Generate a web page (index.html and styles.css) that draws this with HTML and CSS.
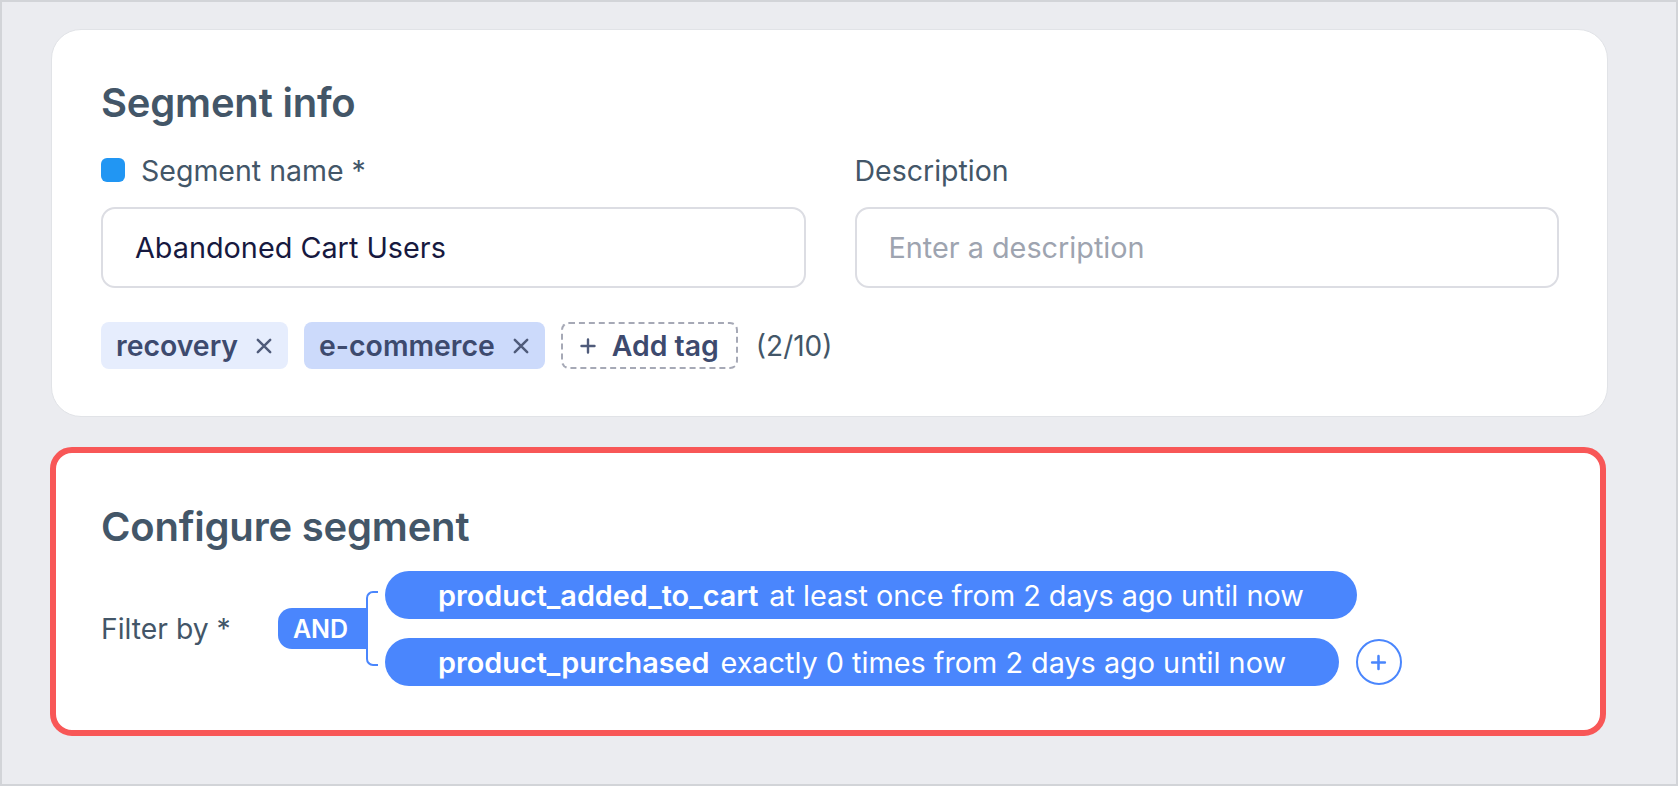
FILE: index.html
```html
<!DOCTYPE html>
<html lang="en">
<head>
<meta charset="utf-8">
<title>Segment</title>
<link rel="stylesheet" href="styles.css">
</head>
<body>
<div class="frame">
  <section class="card info">
    <h2 class="title">Segment info</h2>
    <div class="fields">
      <div class="field">
        <div class="label"><span class="swatch"></span>Segment name *</div>
        <div class="input">Abandoned Cart Users</div>
      </div>
      <div class="field">
        <div class="label">Description</div>
        <div class="input placeholder">Enter a description</div>
      </div>
    </div>
    <div class="tags">
      <span class="tag tag-light">recovery<svg class="x" viewBox="0 0 16 16"><path d="M2.5 2.5l11 11M13.5 2.5l-11 11"/></svg></span>
      <span class="tag tag-mid">e-commerce<svg class="x" viewBox="0 0 16 16"><path d="M2.5 2.5l11 11M13.5 2.5l-11 11"/></svg></span>
      <span class="add-tag"><svg class="plus-sm" viewBox="0 0 16 16"><path d="M8 1.5v13M1.5 8h13"/></svg>Add tag</span>
      <span class="count">(2/10)</span>
    </div>
  </section>
  <section class="card config">
    <h2 class="title">Configure segment</h2>
    <div class="filter">
      <div class="filter-label">Filter by *</div>
      <div class="and">AND</div>
      <div class="bracket"></div>
      <div class="rules">
        <div class="rule-row">
          <div class="pill"><b>product_added_to_cart</b>at least once from 2 days ago until now</div>
        </div>
        <div class="rule-row">
          <div class="pill"><b>product_purchased</b>exactly 0 times from 2 days ago until now</div>
          <div class="add-rule"><svg viewBox="0 0 16 16"><path d="M8 2v12M2 8h12"/></svg></div>
        </div>
      </div>
    </div>
  </section>
</div>
</body>
</html>
```
FILE: styles.css
```css
html, body {
  margin: 0;
  padding: 0;
}
body {
  font-family: Inter, "Noto Sans", sans-serif;
  background: #ebecf0;
}
.frame {
  box-sizing: border-box;
  width: 1678px;
  height: 786px;
  border: 2px solid #d2d4d8;
  padding: 27px 68px 0 49px;
}
.card {
  background: #fff;
  box-sizing: border-box;
}
.info {
  border: 1px solid #e1e3e7;
  border-radius: 30px;
  padding: 49px 48px 47px 49px;
}
.title {
  margin: 0;
  font-size: 40px;
  line-height: 48px;
  font-weight: 600;
  color: #435668;
  letter-spacing: -0.2px;
}
.fields {
  display: grid;
  grid-template-columns: 1fr 1fr;
  column-gap: 49px;
  margin-top: 28px;
}
.label {
  display: flex;
  align-items: center;
  height: 30px;
  font-size: 28.5px;
  color: #435668;
}
.swatch {
  width: 24px;
  height: 24px;
  border-radius: 6px;
  background: #2196f3;
  margin-right: 16px;
}
.input {
  box-sizing: border-box;
  margin-top: 22px;
  height: 81px;
  border: 2px solid #dcdde3;
  border-radius: 14px;
  padding-left: 32px;
  display: flex;
  align-items: center;
  font-size: 28.8px;
  color: #17193f;
}
.input.placeholder {
  color: #9ea4b0;
}
.tags {
  display: flex;
  align-items: center;
  margin-top: 34px;
  height: 47px;
}
.tag {
  display: flex;
  align-items: center;
  height: 47px;
  box-sizing: border-box;
  padding: 0 15px;
  border-radius: 8px;
  font-size: 28.4px;
  font-weight: 600;
  color: #3d4a6e;
  margin-right: 16px;
}
.tag-light { background: #e6edfd; }
.tag-mid { background: #ccdafb; }
.x {
  width: 18px;
  height: 18px;
  margin-left: 17px;
  fill: none;
  stroke: #4f5b7a;
  stroke-width: 2.2;
  stroke-linecap: round;
}
.add-tag {
  display: flex;
  align-items: center;
  box-sizing: border-box;
  height: 47px;
  padding: 0 17px;
  border: 2px dashed #a6a9b6;
  border-radius: 8px;
  font-size: 28.4px;
  font-weight: 600;
  color: #3d4a6e;
  margin-right: 18px;
}
.plus-sm {
  width: 16px;
  height: 16px;
  margin-right: 16px;
  fill: none;
  stroke: #4f5b7a;
  stroke-width: 2.4;
  stroke-linecap: round;
}
.count {
  font-size: 28px;
  color: #435668;
}
.config {
  margin: 30px 2px 0 -1px;
  border: 6px solid #f85757;
  border-radius: 22px;
  padding: 50px 45px 44px 45px;
}
.filter {
  display: flex;
  align-items: center;
  margin-top: 20px;
}
.filter-label {
  width: 177px;
  flex: none;
  font-size: 28.3px;
  color: #435668;
}
.and {
  box-sizing: border-box;
  width: 89px;
  height: 41px;
  background: #4a86fd;
  border-radius: 14px 0 0 14px;
  color: #fff;
  font-size: 25px;
  font-weight: 600;
  display: flex;
  align-items: center;
  justify-content: center;
  padding-right: 4px;
}
.bracket {
  box-sizing: border-box;
  width: 12px;
  height: 75px;
  margin-left: -1px;
  border: 2px solid #4a86fd;
  border-right: none;
  border-radius: 7px 0 0 7px;
}
.rules {
  display: flex;
  flex-direction: column;
  gap: 19px;
  margin-left: 7px;
}
.rule-row {
  display: flex;
  align-items: center;
  gap: 17px;
}
.pill {
  display: flex;
  align-items: center;
  height: 48px;
  padding: 0 53px;
  border-radius: 24px;
  background: #4a86fd;
  color: #fff;
  font-size: 28.8px;
  white-space: nowrap;
}
.pill b {
  font-weight: 600;
  margin-right: 11px;
}
.add-rule {
  box-sizing: border-box;
  width: 46px;
  height: 46px;
  border: 2px solid #4a86fd;
  border-radius: 50%;
  display: flex;
  align-items: center;
  justify-content: center;
}
.add-rule svg {
  width: 17px;
  height: 17px;
  fill: none;
  stroke: #4a86fd;
  stroke-width: 2.4;
  stroke-linecap: round;
}
```
